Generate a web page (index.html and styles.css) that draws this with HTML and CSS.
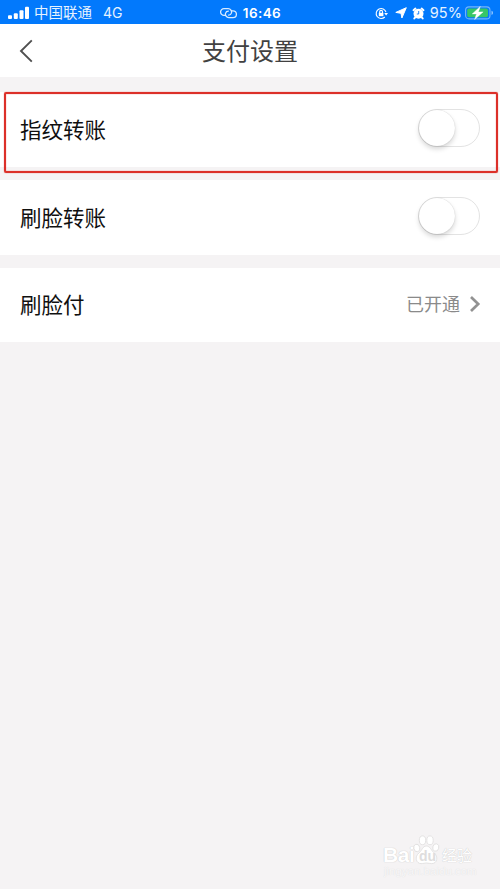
FILE: index.html
```html
<!DOCTYPE html>
<html lang="zh-CN">
<head>
<meta charset="utf-8">
<title>支付设置</title>
<link rel="stylesheet" href="styles.css">
</head>
<body>
<div class="status">
  <div class="status-left">
    <svg width="22" height="14" viewBox="0 0 22 14" fill="#fff"><rect x="0" y="9.2" width="4" height="3.8" rx="1"/><rect x="5.8" y="7.2" width="4" height="5.8" rx="1"/><rect x="11.5" y="4.2" width="4" height="8.8" rx="1"/><rect x="17" y=".7" width="4" height="12.3" rx="1"/></svg>
    <span class="carrier">中国联通</span><span class="network">4G</span>
  </div>
  <div class="status-time">
    <svg width="17" height="12" viewBox="0 0 17 12" fill="none" stroke="#d9ebff" stroke-width="1.3" stroke-linecap="round"><path d="M5.6 8.4H4a3.4 3.4 0 0 1 0-6.8h4.2a3.4 3.4 0 0 1 3.2 4.5c-.4 1.3-1.6 2-2.8 2"/><path d="M11.4 3.8H13a3.4 3.4 0 0 1 0 6.8H8.8a3.4 3.4 0 0 1-3.2-4.5c.4-1.3 1.6-2 2.8-2"/></svg>
    <span>16:46</span>
  </div>
  <div class="status-right">
    <svg width="13" height="13" viewBox="0 0 13 13" fill="none" stroke="#fff" stroke-width="1.1"><path d="M11 5.2A5 5 0 1 0 9.8 10"/><path d="M9.2 6h3.8L11.1 8.6z" fill="#fff" stroke="none"/><rect x="3.8" y="5.8" width="4.6" height="3.4" fill="#fff" stroke="none"/><path d="M4.7 6V4.8a1.4 1.4 0 0 1 2.8 0V6"/></svg>
    <svg class="arrow" width="12" height="12" viewBox="0 0 12 12" fill="#fff"><path d="M11.3.7 6.9 11 6 6.3.8 5.4z" stroke="#fff" stroke-width="1" stroke-linejoin="round"/></svg>
    <svg width="13" height="13" viewBox="0 0 13 13"><circle cx="6.5" cy="6.8" r="5" fill="#fff"/><path d="M1.5 3.2 3.4 1.6M11.5 3.2 9.6 1.6M3 10.6l-.7.8M10 10.6l.7.8" stroke="#fff" stroke-width="2" stroke-linecap="round"/><path d="M6.7 4v3H4.8" fill="none" stroke="#0b7bfa" stroke-width=".9"/></svg>
    <span class="percent">95%</span>
    <svg width="29" height="14" viewBox="0 0 29 14"><rect x=".6" y=".9" width="24.4" height="12" rx="3.4" fill="none" stroke="#72b5fc" stroke-width="1.1"/><rect x="2.2" y="2.5" width="20.8" height="8.8" rx="1.8" fill="#37c665"/><path d="M26.5 4.8c2 .6 2 3.6 0 4.2z" fill="#8cc4fd"/><path d="M15.3.4 7.2 7.9h4.3L9.6 13.6l8.5-7.7h-4.7z" fill="#fff" stroke="#fff" stroke-width=".4"/></svg>
  </div>
</div>
<header class="header">
  <svg class="back" width="15" height="24" viewBox="0 0 15 24" fill="none" stroke="#505050" stroke-width="1.9"><path d="M12.8 1.4 2 12l10.8 10.6"/></svg>
  <h1>支付设置</h1>
</header>
<main class="settings">
  <section class="row"><span class="label">指纹转账</span><span class="switch"><span class="knob"></span></span></section>
  <section class="row"><span class="label">刷脸转账</span><span class="switch"><span class="knob"></span></span></section>
  <section class="row last"><span class="label">刷脸付</span><span class="value"><span class="state">已开通</span><svg width="12" height="18" viewBox="0 0 12 18" fill="none" stroke="#929292" stroke-width="2.7"><path d="M2 2l7.2 7L2 16"/></svg></span></section>
  <div class="highlight"></div>
</main>
<div class="watermark">
  <div class="brand">
    <span class="latin">Bai</span>
    <svg width="27" height="30" viewBox="0 0 27 30"><g fill="#fff" stroke="#dedddd" stroke-width=".8"><ellipse cx="3.8" cy="13" rx="3" ry="3.8" transform="rotate(-15 3.8 13)"/><ellipse cx="9.5" cy="5.3" rx="3.2" ry="4.4"/><ellipse cx="17" cy="5.3" rx="3.2" ry="4.4"/><ellipse cx="22.8" cy="12.5" rx="3" ry="3.8" transform="rotate(15 22.8 12.5)"/><path d="M13.3 11c-3.6 0-4.2 4.4-7.2 6.8-5 4-3 10.8 2 10.8 2.5 0 3.5-.6 5.5-.6s3 .6 5.2.6c5.3 0 7-6.8 2.2-10.8-3-2.6-4-6.8-7.7-6.8z"/></g><text x="6" y="25.5" class="du">du</text></svg>
    <span class="cn">经验</span>
  </div>
  <div class="url">jingyan.baidu.com</div>
</div>
</body>
</html>
```
FILE: styles.css
```css
* { box-sizing: border-box; }
body {
  margin: 0;
  height: 889px;
  overflow: hidden;
  background: #f5f3f4;
  font-family: "Liberation Sans", "Noto Sans CJK SC", sans-serif;
  color: #101010;
}
svg { display: block; flex: none; }
.status {
  height: 24px;
  padding: 1px 6px 0 8px;
  background: #0279fc;
  color: #e5f2ff;
  display: grid;
  grid-template-columns: 1fr auto 1fr;
  align-items: center;
  font: 14.5px/24px Inter, "Noto Sans CJK SC", sans-serif;
}
.status-left, .status-time, .status-right { display: flex; align-items: center; white-space: nowrap; }
.carrier { margin-left: 4px; }
.network { margin-left: 11px; font-size: 14px; }
.status-time { gap: 6px; margin-left: -1px; font-size: 13.5px; font-weight: 600; letter-spacing: .4px; color: #fff; }
.status-right { justify-content: flex-end; gap: 5px; }
.arrow { margin-left: 2px; }
.percent { font-size: 14.5px; letter-spacing: .1px; margin-right: -2px; }
.header {
  height: 53px;
  padding: 0 19px;
  background: #fff;
  display: grid;
  grid-template-columns: 15px 1fr 15px;
  align-items: center;
}
.header h1 { margin: 2px 0 0; text-align: center; font-size: 24px; line-height: 52px; font-weight: 400; color: #414141; }
.settings { position: relative; padding-top: 15px; display: grid; gap: 13px; }
.row {
  height: 75px;
  padding: 0 20px;
  background: #fff;
  display: flex;
  align-items: center;
  justify-content: space-between;
  font-size: 21.5px;
  line-height: 32px;
}
.row.last { height: 74px; }
.label { padding-top: 2px; }
.last .label { padding-top: 1px; }
.switch {
  width: 62px;
  height: 38px;
  margin-bottom: 3px;
  border: 1.5px solid #e3e3e3;
  border-radius: 19px;
}
.knob {
  display: block;
  width: 36px;
  height: 36px;
  border-radius: 50%;
  background: #fff;
  box-shadow: 0 3px 5px rgba(0, 0, 0, .16), 0 0 1px rgba(0, 0, 0, .22);
}
.value { display: flex; align-items: center; gap: 9px; font-size: 18px; color: #8a8a8a; margin: 0 -1px 2px 0; }
.state { padding-top: 2px; }
.highlight {
  position: absolute;
  left: 4px;
  top: 15px;
  width: 494px;
  height: 81px;
  border: 2px solid #dc3029;
  border-radius: 2px;
  box-shadow: 0 0 1px #dc3029, inset 0 0 1px #dc3029;
}
.watermark { position: absolute; left: 383px; top: 834px; width: 94px; color: #fff; }
.brand { display: flex; align-items: flex-end; height: 31px; text-shadow: 0 0 1px #cacaca, 0 0 1px #d5d5d5; }
.brand svg { text-shadow: none; }
.latin { font-size: 21px; line-height: 21px; font-weight: 700; letter-spacing: -.4px; width: 30px; }
.du { font: 700 14px "Liberation Sans", sans-serif; fill: #dedddd; }
.cn { margin-left: 2px; font-size: 15px; line-height: 18px; }
.url { font-size: 11.5px; line-height: 13px; margin-left: 1px; color: #f8f7f8; text-shadow: 0 0 1px #d8d8d8; }
```
